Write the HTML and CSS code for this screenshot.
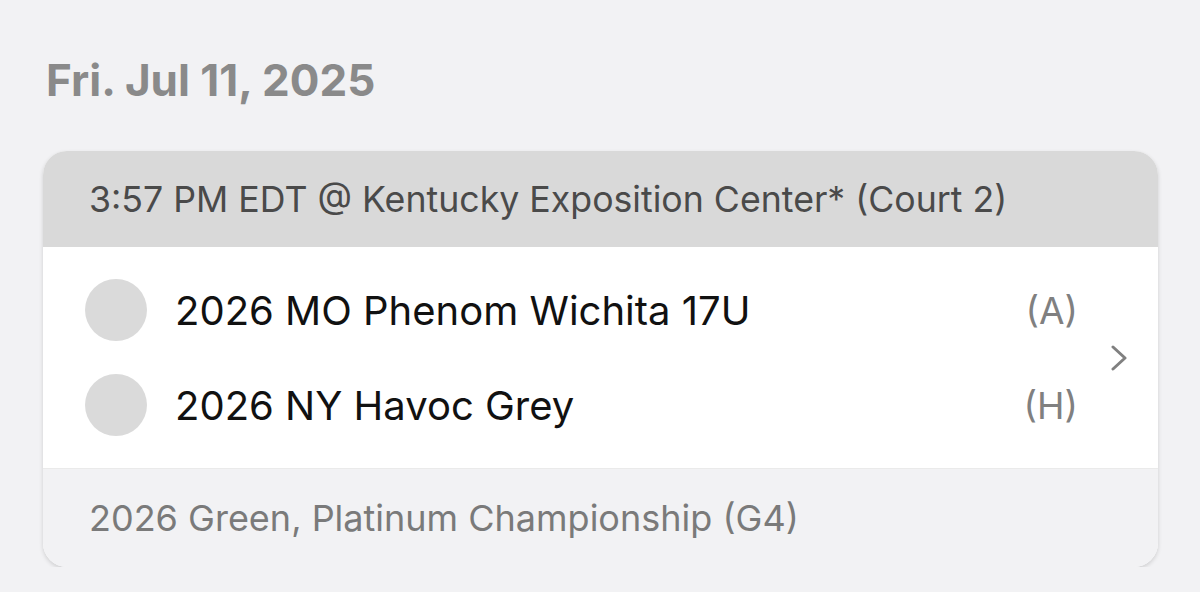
FILE: index.html
```html
<!DOCTYPE html>
<html>
<head>
<meta charset="utf-8">
<link rel="stylesheet" href="styles.css">
</head>
<body>
<div class="page">
  <h1 class="date">Fri. Jul 11, 2025</h1>
  <div class="card">
    <div class="card-head">3:57 PM EDT @ Kentucky Exposition Center* (Court 2)</div>
    <div class="card-body">
      <div class="teams">
        <div class="team">
          <span class="avatar"></span>
          <span class="name">2026 MO Phenom Wichita 17U</span>
          <span class="side">(A)</span>
        </div>
        <div class="team">
          <span class="avatar"></span>
          <span class="name">2026 NY Havoc Grey</span>
          <span class="side">(H)</span>
        </div>
      </div>
      <svg class="chevron" width="18" height="26" viewBox="0 0 18 26"><path d="M3 2 L15 13 L3 24" fill="none" stroke="#808080" stroke-width="3" stroke-linecap="round" stroke-linejoin="round"/></svg>
    </div>
    <div class="card-foot">2026 Green, Platinum Championship (G4)</div>
  </div>
</div>
</body>
</html>
```

FILE: styles.css
```css
html, body {
  margin: 0;
  padding: 0;
  background: #f2f2f4;
  font-family: Inter, "Liberation Sans", sans-serif;
}
.page {
  padding: 52px 42px 0 43px;
}
.date {
  margin: 0 0 43px 3px;
  font-size: 44px;
  line-height: 56px;
  font-weight: 700;
  color: #8a8a8a;
}
.card {
  width: 1115px;
  border-radius: 24px;
  overflow: hidden;
  box-shadow: 0 2px 4px rgba(0,0,0,0.15);
  background: #fff;
}
.card-head {
  height: 96px;
  display: flex;
  align-items: center;
  padding-left: 46px;
  background: #d9d9d9;
  color: #4a4a4a;
  font-size: 35.7px;
}
.card-body {
  height: 221px;
  display: flex;
  align-items: center;
  background: #fff;
}
.teams {
  flex: 1;
  display: flex;
  flex-direction: column;
  gap: 33px;
  padding-left: 42px;
}
.team {
  display: flex;
  align-items: center;
  height: 62px;
}
.avatar {
  width: 62px;
  height: 62px;
  border-radius: 50%;
  background: #dadada;
  flex: none;
}
.name {
  flex: 1;
  margin-left: 28px;
  font-size: 40px;
  color: #111;
}
.side {
  font-size: 37px;
  color: #808080;
  text-align: right;
}
.chevron {
  margin: 0 30px 0 32px;
}
.card-foot {
  height: 98px;
  display: flex;
  align-items: center;
  padding-left: 46px;
  background: #f2f2f4;
  color: #7a7a7a;
  font-size: 36px;
  border-top: 1px solid #eaeaea;
}
```
